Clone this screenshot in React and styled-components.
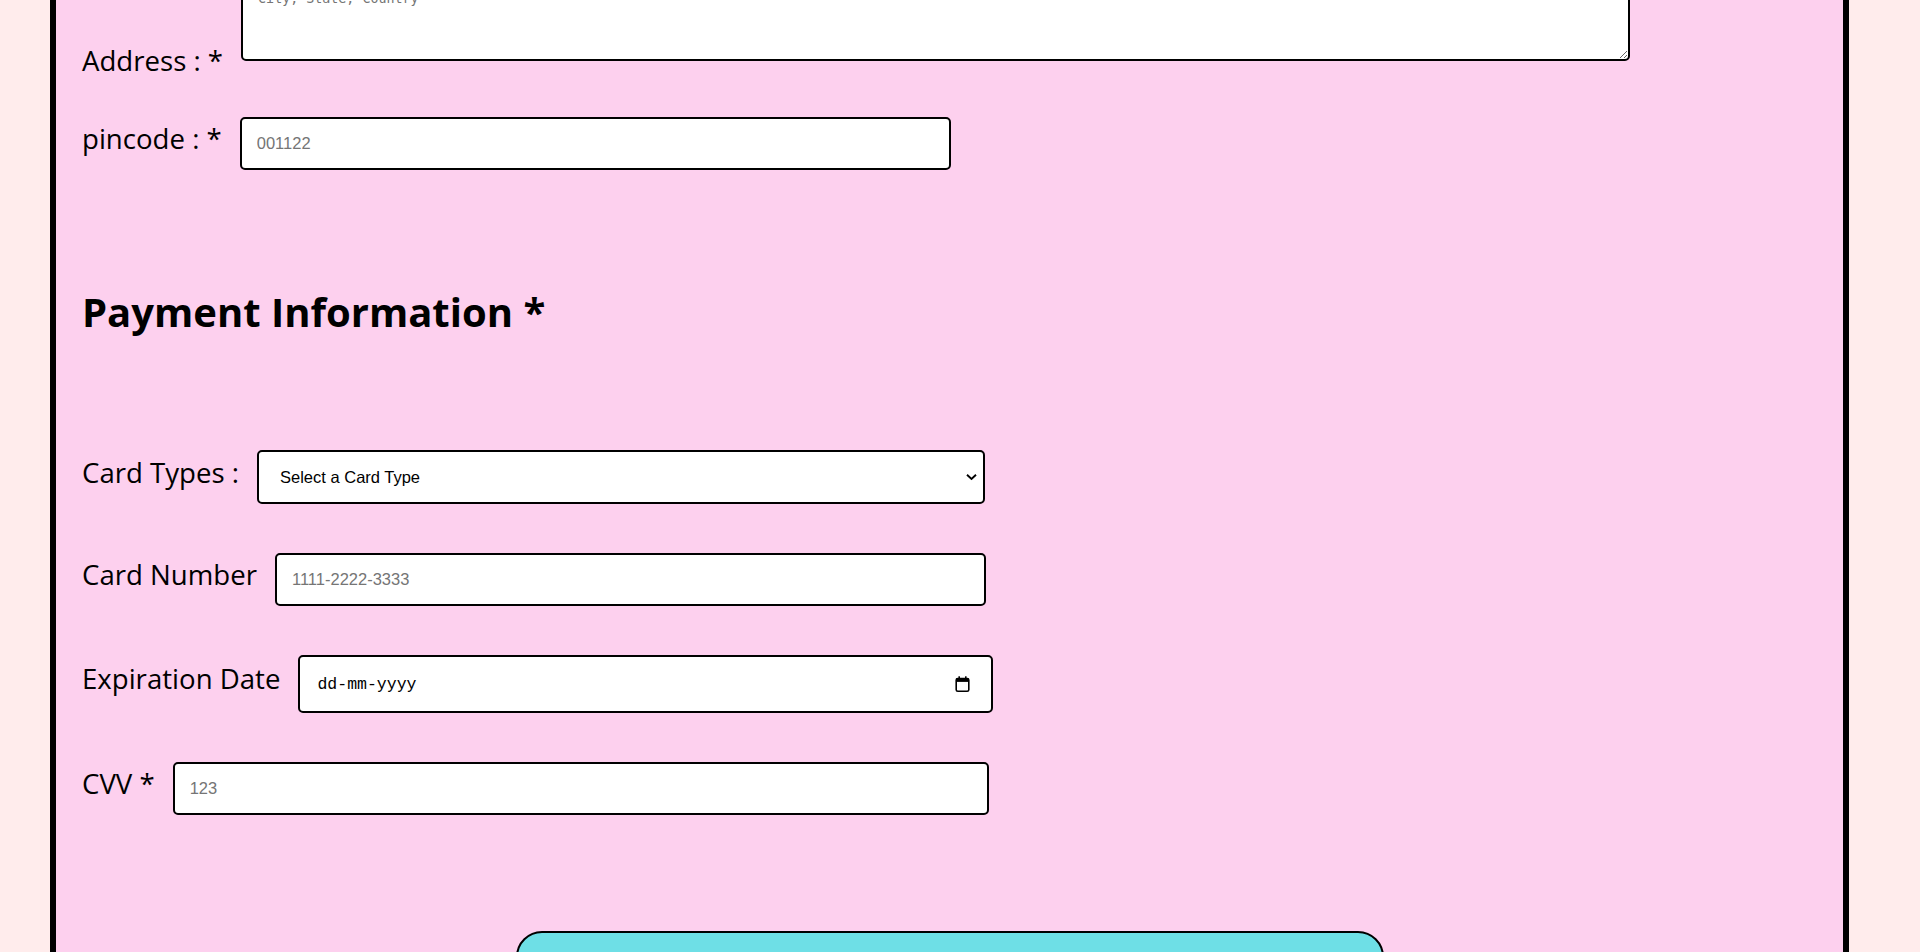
import React from "react";
import styled, { createGlobalStyle } from "styled-components";

const GlobalStyle = createGlobalStyle`
  html, body {
    margin: 0;
    padding: 0;
    background: #ffecec;
  }
  body {
    font-family: "Open Sans", "DejaVu Sans", sans-serif;
  }
`;

/* the page is shown scrolled: the top of the form lies above the viewport */
const Page = styled.div`
  padding: 0 0 60px 50px;
  margin-top: -32px;
`;

const Panel = styled.form`
  box-sizing: border-box;
  width: 1799px;
  background: #fdd0ee;
  border: 6px solid #000;
  padding: 0 26px 70px;
  display: flex;
  flex-direction: column;
`;

const Row = styled.div`
  display: flex;
  align-items: ${(p) => p.$align || "baseline"};
  margin-top: ${(p) => p.$gap || 0}px;
`;

const Label = styled.label`
  font-family: "Open Sans", sans-serif;
  font-size: 27.6px;
  line-height: 38px;
  color: #000;
  margin-right: 18px;
  white-space: nowrap;
`;

const Heading = styled.h2`
  margin: ${(p) => p.$gap}px 0 0;
  font-family: "Open Sans", sans-serif;
  font-weight: 700;
  font-size: 40px;
  line-height: 48px;
  color: #000;
`;

const TextArea = styled.textarea`
  box-sizing: border-box;
  width: 1389px;
  height: 87px;
  margin: 0 0 18px;
  padding: 15px;
  border: 2px solid #000;
  border-radius: 5px;
  background: #fff;
  font-family: "DejaVu Sans Mono", monospace;
  font-size: 13.33px;
  outline: none;
  &::placeholder {
    color: #757575;
  }
`;

const Field = styled.input`
  box-sizing: border-box;
  width: ${(p) => p.$w}px;
  height: ${(p) => p.$h || 53}px;
  margin: 0;
  padding: 0 ${(p) => p.$pad || 15}px;
  border: 2px solid #000;
  border-radius: 5px;
  background: #fff;
  font-family: ${(p) =>
    p.$mono ? '"Liberation Mono", monospace' : '"Liberation Sans", Arial, sans-serif'};
  font-size: 16.5px;
  color: #000;
  outline: none;
  &::placeholder {
    color: ${(p) => (p.$mono ? "#000" : "#757575")};
    opacity: 1;
  }
`;

const Holder = styled.div`
  position: relative;
  display: inline-flex;
`;

const Select = styled.select`
  box-sizing: border-box;
  width: 728px;
  height: 54px;
  margin: 0;
  padding: 0 30px 0 21px;
  border: 2px solid #000;
  border-radius: 5px;
  background: #fff;
  color: #000;
  font-family: "Liberation Sans", Arial, sans-serif;
  font-size: 16.5px;
  appearance: none;
  -webkit-appearance: none;
  outline: none;
`;

const Overlay = styled.span`
  position: absolute;
  right: ${(p) => p.$right}px;
  top: 50%;
  transform: translateY(-50%);
  display: flex;
  pointer-events: none;
`;

const SubmitButton = styled.button`
  align-self: center;
  box-sizing: border-box;
  width: 868px;
  height: 86px;
  margin-top: ${(p) => p.$gap}px;
  border: 2px solid #000;
  border-radius: 26px;
  background: #6edfe6;
  font-family: "Open Sans", sans-serif;
  font-size: 28px;
  font-weight: 700;
  color: #000;
  cursor: pointer;
`;

const Chevron = () => (
  <svg width="11" height="7" viewBox="0 0 11 7" fill="none">
    <path d="M1 1.2 L5.5 5.4 L10 1.2" stroke="#000" strokeWidth="1.9" />
  </svg>
);

const CalendarIcon = () => (
  <svg width="15" height="17" viewBox="0 0 15 17" fill="none">
    <rect x="1.2" y="3" width="12.6" height="12.8" rx="1.6" stroke="#000" strokeWidth="1.6" />
    <rect x="1.2" y="3" width="12.6" height="3.4" fill="#000" />
    <rect x="3.4" y="0.8" width="1.6" height="3" fill="#000" />
    <rect x="10" y="0.8" width="1.6" height="3" fill="#000" />
  </svg>
);

export default function App() {
  return (
    <>
      <GlobalStyle />
      <Page>
        <Panel onSubmit={(e) => e.preventDefault()}>
          <Row $align="flex-end">
            <Label htmlFor="address">Address : *</Label>
            <TextArea id="address" placeholder="City, State, Country" />
          </Row>

          <Row $gap={38}>
            <Label htmlFor="pincode">pincode : *</Label>
            <Field id="pincode" $w={711} placeholder="001122" />
          </Row>

          <Heading $gap={118}>Payment Information *</Heading>

          <Row $gap={114}>
            <Label htmlFor="cardtype">Card Types :</Label>
            <Holder>
              <Select id="cardtype" defaultValue="">
                <option value="">Select a Card Type</option>
                <option value="visa">Visa</option>
                <option value="master">MasterCard</option>
                <option value="rupay">RuPay</option>
              </Select>
              <Overlay $right={8}>
                <Chevron />
              </Overlay>
            </Holder>
          </Row>

          <Row $gap={49}>
            <Label htmlFor="cardnumber">Card Number</Label>
            <Field id="cardnumber" $w={711} placeholder="1111-2222-3333" />
          </Row>

          <Row $gap={49}>
            <Label htmlFor="expiry">Expiration Date</Label>
            <Holder>
              <Field id="expiry" $w={695} $h={58} $pad={17} $mono placeholder="dd-mm-yyyy" />
              <Overlay $right={23}>
                <CalendarIcon />
              </Overlay>
            </Holder>
          </Row>

          <Row $gap={49}>
            <Label htmlFor="cvv">CVV *</Label>
            <Field id="cvv" $w={816} placeholder="123" />
          </Row>

          <SubmitButton type="submit" $gap={116}>
            Submit
          </SubmitButton>
        </Panel>
      </Page>
    </>
  );
}
